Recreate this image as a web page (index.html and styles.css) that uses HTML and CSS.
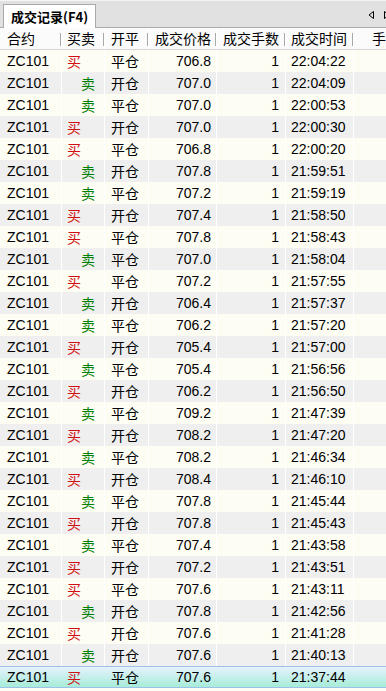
FILE: index.html
```html
<!DOCTYPE html>
<html>
<head>
<meta charset="utf-8">
<link rel="stylesheet" href="styles.css">
</head>
<body>
<div class="panel">
  <div class="tabstrip">
    <div class="tab">成交记录(F4)</div>
    <div class="arrows">
      <svg width="8" height="10" viewBox="0 0 8 10"><path d="M6.5 1.5 L2 5 L6.5 8.5 Z" fill="none" stroke="#000" stroke-width="1"/></svg>
      <svg width="8" height="10" viewBox="0 0 8 10"><path d="M1.5 1.5 L6 5 L1.5 8.5 Z" fill="none" stroke="#000" stroke-width="1"/></svg>
    </div>
  </div>
  <div class="grid head">
    <div class="c c1">合约</div>
    <div class="c c2">买卖</div>
    <div class="c c3">开平</div>
    <div class="c c4">成交价格</div>
    <div class="c c5">成交手数</div>
    <div class="c c6">成交时间</div>
    <div class="c c7">手</div>
  </div>
  <div class="body">
    <div class="grid row"><div class="c c1">ZC101</div><div class="c c2 buy">买</div><div class="c c3">平仓</div><div class="c c4">706.8</div><div class="c c5">1</div><div class="c c6">22:04:22</div><div class="c c7"></div></div>
    <div class="grid row"><div class="c c1">ZC101</div><div class="c c2 sell">卖</div><div class="c c3">开仓</div><div class="c c4">707.0</div><div class="c c5">1</div><div class="c c6">22:04:09</div><div class="c c7"></div></div>
    <div class="grid row"><div class="c c1">ZC101</div><div class="c c2 sell">卖</div><div class="c c3">平仓</div><div class="c c4">707.0</div><div class="c c5">1</div><div class="c c6">22:00:53</div><div class="c c7"></div></div>
    <div class="grid row"><div class="c c1">ZC101</div><div class="c c2 buy">买</div><div class="c c3">开仓</div><div class="c c4">707.0</div><div class="c c5">1</div><div class="c c6">22:00:30</div><div class="c c7"></div></div>
    <div class="grid row"><div class="c c1">ZC101</div><div class="c c2 buy">买</div><div class="c c3">平仓</div><div class="c c4">706.8</div><div class="c c5">1</div><div class="c c6">22:00:20</div><div class="c c7"></div></div>
    <div class="grid row"><div class="c c1">ZC101</div><div class="c c2 sell">卖</div><div class="c c3">开仓</div><div class="c c4">707.8</div><div class="c c5">1</div><div class="c c6">21:59:51</div><div class="c c7"></div></div>
    <div class="grid row"><div class="c c1">ZC101</div><div class="c c2 sell">卖</div><div class="c c3">平仓</div><div class="c c4">707.2</div><div class="c c5">1</div><div class="c c6">21:59:19</div><div class="c c7"></div></div>
    <div class="grid row"><div class="c c1">ZC101</div><div class="c c2 buy">买</div><div class="c c3">开仓</div><div class="c c4">707.4</div><div class="c c5">1</div><div class="c c6">21:58:50</div><div class="c c7"></div></div>
    <div class="grid row"><div class="c c1">ZC101</div><div class="c c2 buy">买</div><div class="c c3">平仓</div><div class="c c4">707.8</div><div class="c c5">1</div><div class="c c6">21:58:43</div><div class="c c7"></div></div>
    <div class="grid row"><div class="c c1">ZC101</div><div class="c c2 sell">卖</div><div class="c c3">平仓</div><div class="c c4">707.0</div><div class="c c5">1</div><div class="c c6">21:58:04</div><div class="c c7"></div></div>
    <div class="grid row"><div class="c c1">ZC101</div><div class="c c2 buy">买</div><div class="c c3">平仓</div><div class="c c4">707.2</div><div class="c c5">1</div><div class="c c6">21:57:55</div><div class="c c7"></div></div>
    <div class="grid row"><div class="c c1">ZC101</div><div class="c c2 sell">卖</div><div class="c c3">开仓</div><div class="c c4">706.4</div><div class="c c5">1</div><div class="c c6">21:57:37</div><div class="c c7"></div></div>
    <div class="grid row"><div class="c c1">ZC101</div><div class="c c2 sell">卖</div><div class="c c3">平仓</div><div class="c c4">706.2</div><div class="c c5">1</div><div class="c c6">21:57:20</div><div class="c c7"></div></div>
    <div class="grid row"><div class="c c1">ZC101</div><div class="c c2 buy">买</div><div class="c c3">开仓</div><div class="c c4">705.4</div><div class="c c5">1</div><div class="c c6">21:57:00</div><div class="c c7"></div></div>
    <div class="grid row"><div class="c c1">ZC101</div><div class="c c2 sell">卖</div><div class="c c3">平仓</div><div class="c c4">705.4</div><div class="c c5">1</div><div class="c c6">21:56:56</div><div class="c c7"></div></div>
    <div class="grid row"><div class="c c1">ZC101</div><div class="c c2 buy">买</div><div class="c c3">开仓</div><div class="c c4">706.2</div><div class="c c5">1</div><div class="c c6">21:56:50</div><div class="c c7"></div></div>
    <div class="grid row"><div class="c c1">ZC101</div><div class="c c2 sell">卖</div><div class="c c3">平仓</div><div class="c c4">709.2</div><div class="c c5">1</div><div class="c c6">21:47:39</div><div class="c c7"></div></div>
    <div class="grid row"><div class="c c1">ZC101</div><div class="c c2 buy">买</div><div class="c c3">开仓</div><div class="c c4">708.2</div><div class="c c5">1</div><div class="c c6">21:47:20</div><div class="c c7"></div></div>
    <div class="grid row"><div class="c c1">ZC101</div><div class="c c2 sell">卖</div><div class="c c3">平仓</div><div class="c c4">708.2</div><div class="c c5">1</div><div class="c c6">21:46:34</div><div class="c c7"></div></div>
    <div class="grid row"><div class="c c1">ZC101</div><div class="c c2 buy">买</div><div class="c c3">开仓</div><div class="c c4">708.4</div><div class="c c5">1</div><div class="c c6">21:46:10</div><div class="c c7"></div></div>
    <div class="grid row"><div class="c c1">ZC101</div><div class="c c2 sell">卖</div><div class="c c3">平仓</div><div class="c c4">707.8</div><div class="c c5">1</div><div class="c c6">21:45:44</div><div class="c c7"></div></div>
    <div class="grid row"><div class="c c1">ZC101</div><div class="c c2 buy">买</div><div class="c c3">开仓</div><div class="c c4">707.8</div><div class="c c5">1</div><div class="c c6">21:45:43</div><div class="c c7"></div></div>
    <div class="grid row"><div class="c c1">ZC101</div><div class="c c2 sell">卖</div><div class="c c3">平仓</div><div class="c c4">707.4</div><div class="c c5">1</div><div class="c c6">21:43:58</div><div class="c c7"></div></div>
    <div class="grid row"><div class="c c1">ZC101</div><div class="c c2 buy">买</div><div class="c c3">开仓</div><div class="c c4">707.2</div><div class="c c5">1</div><div class="c c6">21:43:51</div><div class="c c7"></div></div>
    <div class="grid row"><div class="c c1">ZC101</div><div class="c c2 buy">买</div><div class="c c3">平仓</div><div class="c c4">707.6</div><div class="c c5">1</div><div class="c c6">21:43:11</div><div class="c c7"></div></div>
    <div class="grid row"><div class="c c1">ZC101</div><div class="c c2 sell">卖</div><div class="c c3">开仓</div><div class="c c4">707.8</div><div class="c c5">1</div><div class="c c6">21:42:56</div><div class="c c7"></div></div>
    <div class="grid row"><div class="c c1">ZC101</div><div class="c c2 buy">买</div><div class="c c3">开仓</div><div class="c c4">707.6</div><div class="c c5">1</div><div class="c c6">21:41:28</div><div class="c c7"></div></div>
    <div class="grid row"><div class="c c1">ZC101</div><div class="c c2 sell">卖</div><div class="c c3">开仓</div><div class="c c4">707.6</div><div class="c c5">1</div><div class="c c6">21:40:13</div><div class="c c7"></div></div>
    <div class="grid row selected"><div class="c c1">ZC101</div><div class="c c2 buy">买</div><div class="c c3">平仓</div><div class="c c4">707.6</div><div class="c c5">1</div><div class="c c6">21:37:44</div><div class="c c7"></div></div>
  </div>
</div>
</body>
</html>
```

FILE: styles.css
```css
html, body {
  margin: 0;
  padding: 0;
  background: #ffffff;
}
.panel {
  width: 386px;
  height: 691px;
  overflow: hidden;
  font-family: "Liberation Sans", "Noto Sans CJK SC", sans-serif;
  font-size: 14px;
  color: #000;
  background: #fdfdf3;
}
.tabstrip {
  height: 28px;
  box-sizing: border-box;
  background: #e1e1e1;
  border-top: 1px solid #f4f4f4;
  border-bottom: 1px solid #a9a9a9;
  display: flex;
  align-items: flex-end;
  position: relative;
}
.tab {
  margin-left: 3px;
  margin-bottom: -1px;
  height: 24px;
  box-sizing: border-box;
  padding: 0 7px 0 7px;
  background: #ffffff;
  border: 1px solid #a9a9a9;
  border-bottom: none;
  font-weight: bold;
  font-size: 13px;
  line-height: 23px;
  font-family: "Noto Sans CJK SC", "Liberation Sans", sans-serif;
}
.arrows {
  margin-left: auto;
  align-self: center;
  display: flex;
  gap: 8px;
  margin-right: -5px;
  margin-top: 2px;
}
.grid {
  display: grid;
  grid-template-columns: 62px 43px 44px 68px 69px 68px 1fr;
  height: 22px;
  box-sizing: border-box;
}
.head {
  background: #fbfbfb;
  border-bottom: 1px solid #d5d5d5;
}
.head .c {
  line-height: 21px;
  position: relative;
  font-family: "Noto Sans CJK SC", sans-serif;
}
.head .c::after {
  content: "";
  position: absolute;
  right: 0;
  top: 5px;
  height: 13px;
  border-right: 1px solid #a8a8a8;
}
.head .c7::after {
  display: none;
}
.c {
  box-sizing: border-box;
  white-space: nowrap;
  overflow: hidden;
  line-height: 22px;
  border-right: 1px solid #ffffff;
}
.c1 { padding-left: 7px; }
.c2 { padding-left: 5px; }
.c3 { padding-left: 6px; }
.c4 { padding-left: 6px; }
.c5 { padding-left: 6px; }
.c6 { padding-left: 5px; }
.c7 { padding-left: 18px; border-right: none; }
.row .c4 { text-align: right; padding-right: 5px; padding-left: 0; }
.row .c5 { text-align: right; padding-right: 6px; padding-left: 0; }
.row .c2, .row .c3 {
  font-family: "Noto Sans CJK SC", sans-serif;
}
.row:nth-child(odd) { background: #fdfdf3; }
.row:nth-child(even) { background: #efefef; }
.buy { color: #d01010; }
.sell { color: #008000; padding-left: 19px; }
.row.selected {
  background: linear-gradient(#e6f2fd, #a6ecd8);
  border-top: 1px solid #9ec1ea;
  border-bottom: 1px solid #9ec1ea;
}
.row.selected .c {
  line-height: 20px;
  border-right-color: transparent;
}
```
